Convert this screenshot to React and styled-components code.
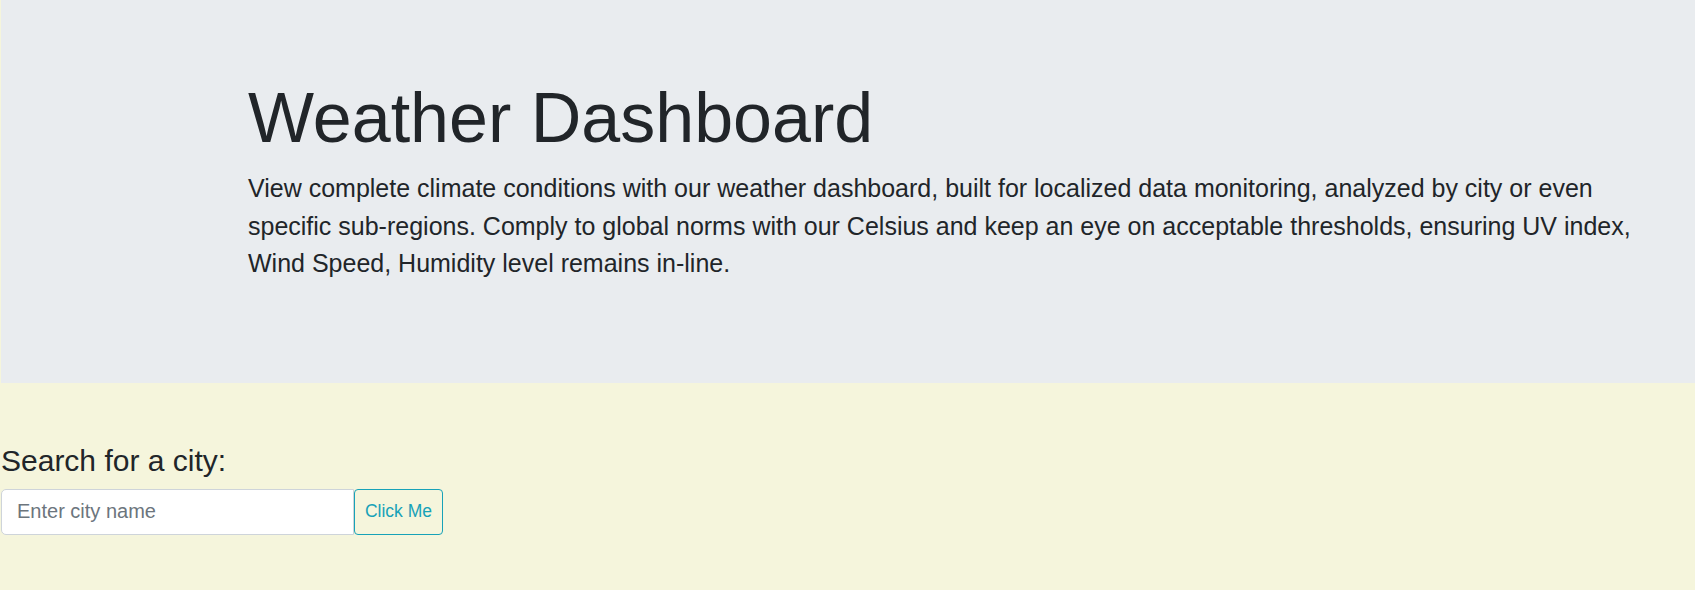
import React from "react";
import styled, { createGlobalStyle } from "styled-components";

const GlobalStyle = createGlobalStyle`
  html, body {
    margin: 0;
    padding: 0;
    background: #f5f5dc;
  }
  body {
    font-family: "Liberation Sans", Arial, sans-serif;
    color: #212529;
    font-size: 20px;
    line-height: 1.5;
  }
`;

const Page = styled.div`
  min-height: 590px;
  padding-left: 1px;
`;

const Jumbotron = styled.header`
  background: #e9ecef;
  padding: 76px 40px 80px 247px;
  margin-bottom: 60px;
`;

const Title = styled.h1`
  margin: 0 0 10px;
  font-size: 70px;
  font-weight: 300;
  line-height: 1.2;
`;

const Lead = styled.p`
  margin: 0 0 20px;
  font-size: 25px;
  line-height: 1.5;
  max-width: 1410px;
`;

const SearchSection = styled.section`
  display: flex;
  flex-direction: column;
`;

const Label = styled.h4`
  margin: 0 0 10px;
  font-size: 30px;
  font-weight: 400;
  line-height: 1.2;
`;

const InputGroup = styled.div`
  display: flex;
  align-items: stretch;
  width: 442px;
  height: 46px;
`;

const CityInput = styled.input`
  box-sizing: border-box;
  width: 353px;
  height: 46px;
  padding: 7px 15px;
  font-family: inherit;
  font-size: 20px;
  color: #495057;
  background: #fff;
  border: 1px solid #ced4da;
  border-radius: 5px 0 0 5px;
  outline: none;
  &::placeholder {
    color: #6c757d;
  }
`;

const Button = styled.button`
  box-sizing: border-box;
  flex: 0 0 89px;
  height: 46px;
  padding: 0 8px;
  white-space: nowrap;
  font-family: inherit;
  font-size: 17.5px;
  line-height: 1;
  color: #17a2b8;
  background: transparent;
  border: 1px solid #17a2b8;
  border-radius: 4px;
  cursor: pointer;
`;

const App = () => {
  return (
    <Page>
      <GlobalStyle />
      <Jumbotron>
        <Title>Weather Dashboard</Title>
        <Lead>
          View complete climate conditions with our weather dashboard, built
          for localized data monitoring, analyzed by city or even specific
          sub-regions. Comply to global norms with our Celsius and keep an eye
          on acceptable thresholds, ensuring UV index, Wind Speed, Humidity
          level remains in-line.
        </Lead>
      </Jumbotron>
      <SearchSection>
        <Label>Search for a city:</Label>
        <InputGroup>
          <CityInput type="text" placeholder="Enter city name" />
          <Button type="button">Click Me</Button>
        </InputGroup>
      </SearchSection>
    </Page>
  );
};

export default App;
